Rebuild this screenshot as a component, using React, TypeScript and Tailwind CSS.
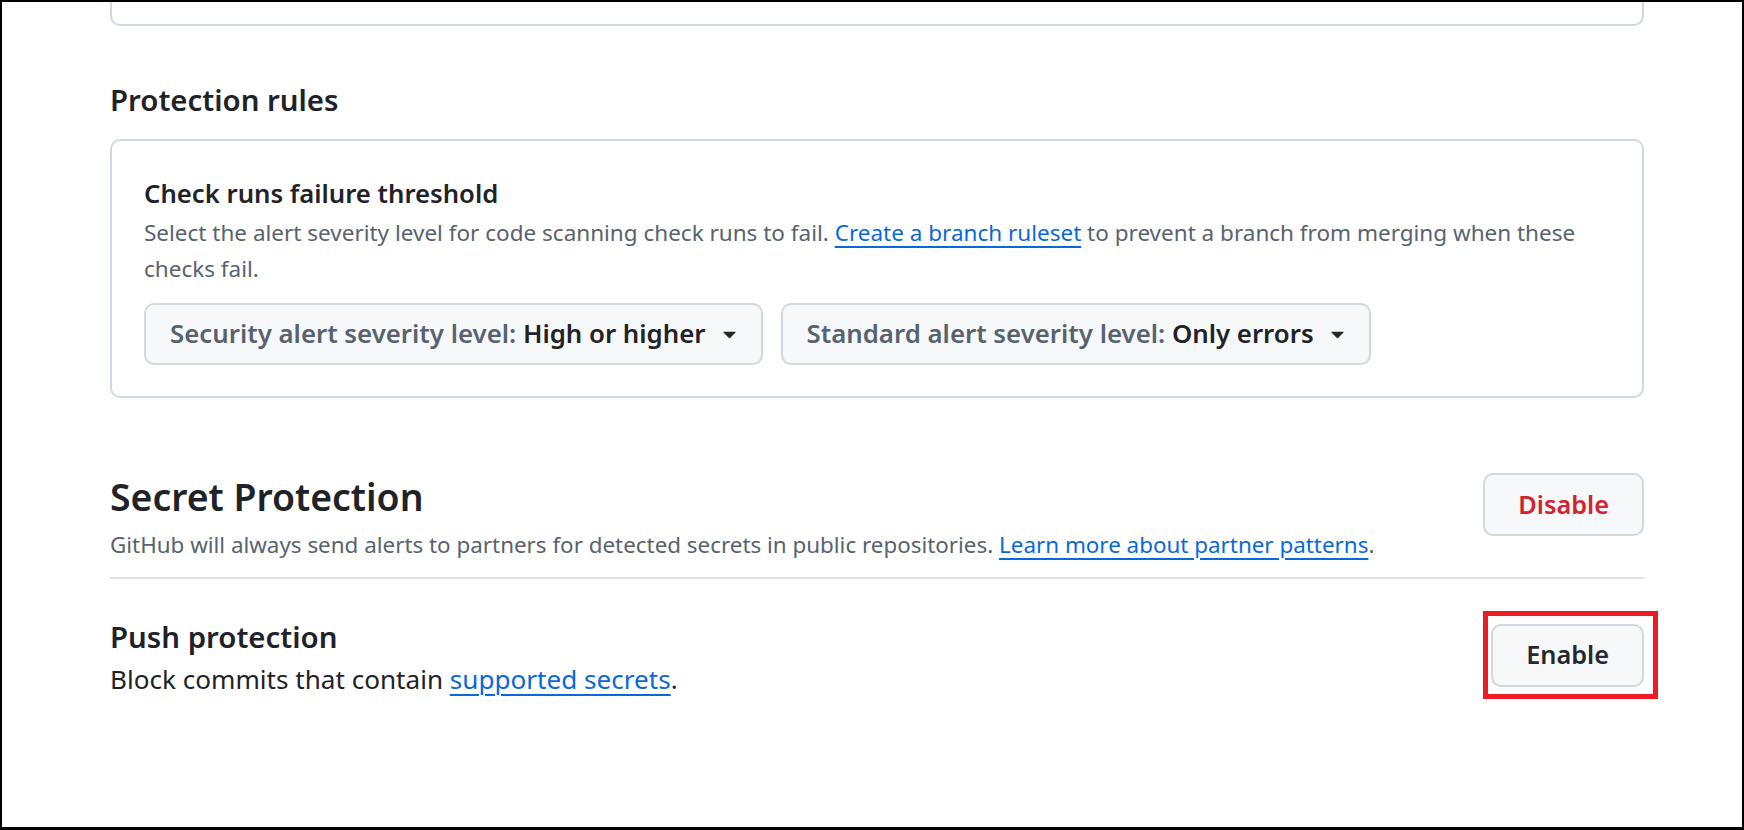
const link = "text-[#0969da] underline decoration-[2px] underline-offset-[5px]";

function Caret() {
  return (
    <svg viewBox="0 0 16 16" className="h-[27px] w-[27px] fill-[#25292e]">
      <path d="m4.427 7.427 3.396 3.396a.25.25 0 0 0 .354 0l3.396-3.396A.25.25 0 0 0 11.396 7H4.604a.25.25 0 0 0-.177.427Z" />
    </svg>
  );
}

function SeverityMenu({ label, value }: { label: string; value: string }) {
  return (
    <button className="flex h-[62px] items-center gap-[10px] rounded-[10px] border-2 border-[#d1d9e0] bg-[#f6f8fa] pl-[24px] pr-[18px] text-[25.8px] leading-none font-semibold">
      <span>
        <span className="text-[#59636e]">{label}:</span>{" "}
        <span className="text-[#1f2328]">{value}</span>
      </span>
      <Caret />
    </button>
  );
}

function ActionButton({ children, danger }: { children: string; danger?: boolean }) {
  return (
    <button
      className={
        danger
          ? "flex h-[63px] items-center rounded-[10px] border-2 border-[#d1d9e0] bg-[#f6f8fa] px-[33px] text-[25.3px] leading-none font-semibold text-[#d1242f]"
          : "flex h-[63px] items-center rounded-[10px] border-2 border-[#d1d9e0] bg-[#f6f8fa] px-[33px] text-[25.3px] leading-none font-semibold text-[#25292e]"
      }
    >
      {children}
    </button>
  );
}

export default function App() {
  return (
    <div className="h-[830px] w-full overflow-hidden border-2 border-b-[3px] border-black bg-white font-['Noto_Sans',sans-serif] text-[#1f2328]">
      <div className="pl-[108px] pr-[98px]">
        {/* tail of the previous box */}
        <div className="h-[24px] rounded-b-[10px] border-2 border-t-0 border-[#d1d9e0]" />

        <h2 className="mt-[56px] text-[29.4px] leading-[1.25] font-semibold">Protection rules</h2>

        <div className="mt-[20px] rounded-[10px] border-2 border-[#d1d9e0] px-[32px] pt-[37px] pb-[31px]">
          <h3 className="text-[25.7px] leading-[32px] font-semibold">Check runs failure threshold</h3>
          <p className="mt-[5px] text-[22.5px] leading-[36px] text-[#59636e]">
            Select the alert severity level for code scanning check runs to fail.{" "}
            <a className={link}>Create a branch ruleset</a> to prevent a branch from merging when these checks fail.
          </p>
          <div className="mt-[16px] flex gap-[18px]">
            <SeverityMenu label="Security alert severity level" value="High or higher" />
            <SeverityMenu label="Standard alert severity level" value="Only errors" />
          </div>
        </div>

        <div className="mt-[76px] flex items-start justify-between">
          <div>
            <h2 className="text-[37.4px] leading-[1.25] font-semibold">Secret Protection</h2>
            <p className="mt-[6px] text-[22.4px] leading-[36px] text-[#59636e]">
              GitHub will always send alerts to partners for detected secrets in public repositories.{" "}
              <a className={link}>Learn more about partner patterns</a>.
            </p>
          </div>
          <div className="-mt-[1px]">
            <ActionButton danger>Disable</ActionButton>
          </div>
        </div>

        <div className="mt-[14px] h-[2px] bg-[#d1d9e0b3]" />

        <div className="mt-[40px] flex items-start justify-between">
          <div>
            <h3 className="text-[29.4px] leading-[1.25] font-semibold">Push protection</h3>
            <p className="mt-[5px] text-[26.1px] leading-[1.5]">
              Block commits that contain <a className={link}>supported secrets</a>.
            </p>
          </div>
          <div className="relative mt-[5px]">
            <ActionButton>Enable</ActionButton>
            <div className="pointer-events-none absolute -top-[13px] -left-[8px] h-[88px] w-[175px] border-[5px] border-[#ed1c24]" />
          </div>
        </div>
      </div>
    </div>
  );
}
